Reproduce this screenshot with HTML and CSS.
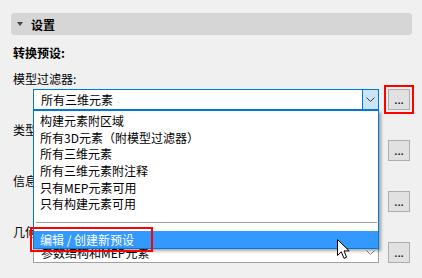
FILE: index.html
```html
<!DOCTYPE html>
<html lang="zh">
<head>
<meta charset="utf-8">
<link rel="stylesheet" href="styles.css">
</head>
<body>
<div class="panel">
  <div class="header"><span class="tri"></span><span class="htitle">设置</span></div>
  <div class="content">
    <div class="title">转换预设:</div>

    <div class="field">
      <div class="label">模型过滤器:</div>
      <div class="row">
        <div class="combo focused">
          <span class="ctext">所有三维元素</span>
          <span class="cbtn"><svg width="9" height="5" viewBox="0 0 9 5"><path d="M0.5 0.5 L4.5 4.5 L8.5 0.5" fill="none" stroke="#404040" stroke-width="1"/></svg></span>
          <div class="list">
            <div class="item">构建元素附区域</div>
            <div class="item">所有3D元素（附模型过滤器）</div>
            <div class="item">所有三维元素</div>
            <div class="item">所有三维元素附注释</div>
            <div class="item">只有MEP元素可用</div>
            <div class="item">只有构建元素可用</div>
            <div class="sep"><span class="sepline"></span></div>
            <div class="item hl">编辑 / 创建新预设<span class="mark"></span></div>
          </div>
        </div>
        <button class="more marked">...</button>
      </div>
    </div>

    <div class="field">
      <div class="label covered">类型映射:</div>
      <div class="row">
        <div class="combo"><span class="ctext"></span><span class="cbtn"><svg width="9" height="5" viewBox="0 0 9 5"><path d="M0.5 0.5 L4.5 4.5 L8.5 0.5" fill="none" stroke="#808080" stroke-width="1"/></svg></span></div>
        <button class="more">...</button>
      </div>
    </div>

    <div class="field">
      <div class="label covered">信息映射:</div>
      <div class="row">
        <div class="combo"><span class="ctext"></span><span class="cbtn"><svg width="9" height="5" viewBox="0 0 9 5"><path d="M0.5 0.5 L4.5 4.5 L8.5 0.5" fill="none" stroke="#808080" stroke-width="1"/></svg></span></div>
        <button class="more">...</button>
      </div>
    </div>

    <div class="field">
      <div class="label covered">几何转换:</div>
      <div class="row">
        <div class="combo"><span class="ctext">参数结构和MEP元素</span><span class="cbtn"><svg width="9" height="5" viewBox="0 0 9 5"><path d="M0.5 0.5 L4.5 4.5 L8.5 0.5" fill="none" stroke="#808080" stroke-width="1"/></svg></span></div>
        <button class="more">...</button>
      </div>
    </div>
  </div>
</div>
<svg class="cursor" width="14" height="21" viewBox="0 0 14 21"><path d="M0.5 0.5 L0.5 16.5 L4.3 12.8 L7 19.3 L9.6 18.2 L7 11.9 L12.2 11.9 Z" fill="#fff" stroke="#000" stroke-width="1" stroke-linejoin="miter"/></svg>
</body>
</html>
```
FILE: styles.css
```css
* { box-sizing: border-box; }
html, body { margin: 0; padding: 0; }
body {
  width: 422px;
  height: 278px;
  overflow: hidden;
  background: #f0f0f0;
  font-family: "Noto Sans CJK SC", "Noto Sans", sans-serif;
  font-size: 12px;
  color: #000;
  position: relative;
}
.panel { padding: 13px 10px 0 11px; }
.header {
  height: 22px;
  background: #d6d6d6;
  border-radius: 3px;
  display: flex;
  align-items: center;
  padding-left: 6px;
}
.tri {
  width: 0; height: 0;
  border-left: 3.5px solid transparent;
  border-right: 3.5px solid transparent;
  border-top: 4px solid #444;
  margin-right: 8px;
}
.htitle { font-weight: bold; line-height: 17px; }
.content { padding-left: 2px; }
.title { margin-top: 9px; font-weight: bold; line-height: 17px; }
.field { margin-top: 9px; }
.field + .field { margin-top: 11px; }
.label { line-height: 17px; white-space: nowrap; }
.label.covered { width: 20px; overflow: hidden; }
.row {
  margin-top: 2px;
  height: 21px;
  display: flex;
  align-items: center;
  padding-left: 20px;
}
.combo {
  position: relative;
  width: 346px;
  height: 21px;
  border: 1px solid #a0a0a0;
  background: #fff;
  display: flex;
  align-items: center;
}
.combo.focused { border-color: #0078d7; }
.ctext { flex: 1; padding-left: 7px; line-height: 17px; white-space: nowrap; }
.cbtn {
  width: 16px;
  height: 100%;
  display: flex;
  align-items: center;
  justify-content: center;
}
.combo.focused .cbtn {
  background: #cce4f7;
  border-left: 1px solid #0078d7;
}
.more {
  margin-left: 9px;
  width: 22px;
  height: 21px;
  padding: 0 0 3px 0;
  border: 1px solid #adadad;
  background: #e1e1e1;
  font-family: "Noto Sans", sans-serif;
  font-size: 12px;
  line-height: 12px;
  color: #000;
  display: flex;
  align-items: flex-end;
  justify-content: center;
}
.more.marked { outline: 2px solid #ff0000; outline-offset: 2px; }
.list {
  position: absolute;
  left: -1px;
  top: 20px;
  width: 346px;
  border: 1px solid #0078d7;
  background: #fff;
  padding-top: 2px;
  box-shadow: 2px 2px 3px rgba(0,0,0,0.35);
  z-index: 5;
}
.item {
  height: 16.7px;
  line-height: 16.7px;
  padding-left: 6px;
  white-space: nowrap;
}
.sep {
  height: 17.8px;
  display: flex;
  align-items: center;
  padding: 0 1px 0 2px;
}
.sepline { flex: 1; height: 1px; background: #a0a0a0; margin-top: 0.4px; }
.item.hl {
  position: relative;
  height: 17px;
  line-height: 17px;
  background: #3399ff;
  color: #fff;
}
.mark {
  position: absolute;
  left: -4px;
  top: -4px;
  width: 123px;
  height: 25px;
  border: 2px solid #ff0000;
}
.cursor { position: absolute; left: 337px; top: 239px; z-index: 10; }
```
